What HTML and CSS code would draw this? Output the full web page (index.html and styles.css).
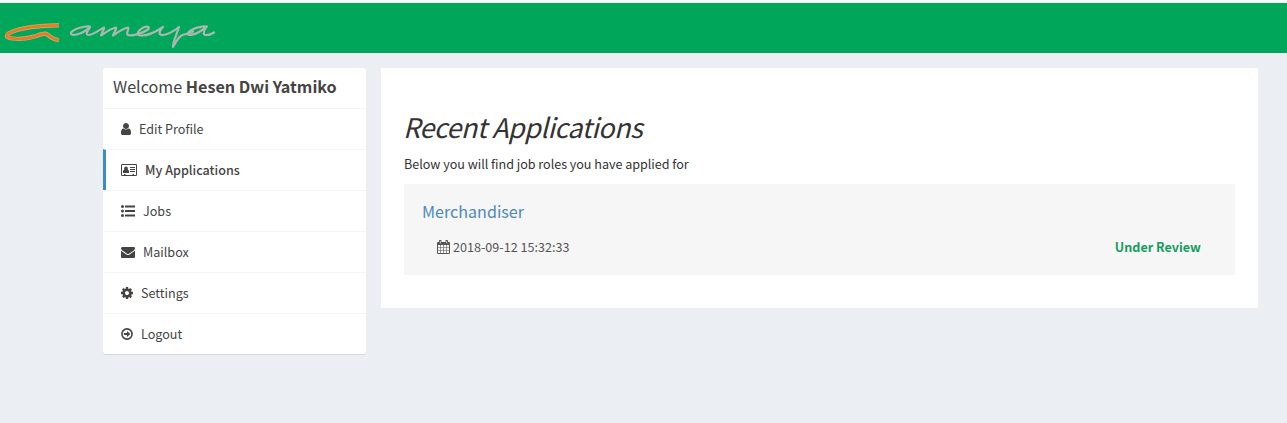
FILE: index.html
```
<!DOCTYPE html>
<html lang="en">
<head>
<meta charset="utf-8">
<title>Recent Applications</title>
<link rel="stylesheet" href="styles.css">
</head>
<body>
<header class="topbar">
  <svg class="logo" width="220" height="50" viewBox="0 3 220 50" role="img" aria-label="ameya">
    <g fill="none" stroke-linecap="butt" stroke-linejoin="round">
      <path stroke="#c5b574" stroke-width="4.200" d="M59 25.300C51 25.200 40 25.800 31 27.200C22 28.500 13 31 9 33.300C5 35.800 6 37.800 13 38.500C20 39.200 29 38.300 35 36.300C39 35 43 33.300 45.500 33.600C49 34.500 51 39.500 59 40"/>
      <path stroke="#e97a25" stroke-width="2.800" d="M59 25.300C51 25.200 40 25.800 31 27.200C22 28.500 13 31 9 33.300C5 35.800 6 37.800 13 38.500C20 39.200 29 38.300 35 36.300C39 35 43 33.300 45.500 33.600C49 34.500 51 39.500 59 40"/>
      <path stroke="#a9b8ad" stroke-width="2.200" stroke-linecap="round" d="M90 26.500C85 25.500 74 29 71 32.500C70 36 76 35 80 33.500C84 32 88 29 90 27.500C87 31 85 35 89 35C94 34.500 99 30 104 27.500C105 28 102 32 101 35.500C106 32 112 28 116 27.500C117 29 114 32 113 35.500C118 32 124 28 128 27.500C130 29 125 33 128 35C132 36.500 143 33 148 29.500C151 26 145 25.500 141 29C136 33 137 35.500 142 35.500C149 35.500 157 31 163 27C158 32 159 35.500 163 35C168 34.500 174 31 179 27C177 34 173 41 173 47C177 41 178 36 184 34.500C188 34 190 33 193 31.500M207 26.500C201 25.500 191 29 188 33C187 36.500 194 35 199 32L206 27.500C203 32 203 35 206 35C209 35 212 34 214 32.500"/>
    </g>
  </svg>
</header>
<div class="page">
  <aside class="sidebar">
    <div class="welcome">Welcome <b>Hesen Dwi Yatmiko</b></div>
    <nav class="menu">
      <a class="item"><svg class="icon" width="10" height="14" viewBox="256 0 1280 1792"><path d="M1536 1399q0 109-62.500 187t-150.500 78h-854q-88 0-150.500-78t-62.500-187q0-85 8.500-160.500t31.500-152 58.500-131 94-89 134.500-34.500q131 128 313 128t313-128q76 0 134.500 34.500t94 89 58.500 131 31.500 152 8.500 160.500zm-256-887q0 159-112.500 271.500t-271.500 112.500-271.500-112.500-112.500-271.500 112.500-271.500 271.500-112.500 271.500 112.500 112.500 271.500z"/></svg><span>Edit Profile</span></a>
      <a class="item active"><svg class="icon" width="16" height="14" viewBox="0 0 16 14"><path fill-rule="evenodd" d="M1.200 1h13.600A1.200 1.200 0 0 1 16 2.200v9.600a1.200 1.200 0 0 1-1.200 1.200H1.200A1.200 1.200 0 0 1 0 11.800V2.200A1.200 1.200 0 0 1 1.200 1zM1 2V12h2v-1h1.500v1h7v-1H13v1h2V2zM9 4h5v1H9zM9 6h5v1H9zM9 8h5v1H9zM2 10V8.200Q2 7 3.200 6.800Q2.900 3.500 5 3.500T6.800 6.800Q8 7 8 8.200V10z"/></svg><span>My Applications</span></a>
      <a class="item"><svg class="icon" width="14" height="14" viewBox="0 0 14 14"><circle cx="1.500" cy="2.400" r="1.500"/><circle cx="1.500" cy="7" r="1.500"/><circle cx="1.500" cy="11.600" r="1.500"/><path d="M4 1.400h10v2H4zM4 6h10v2H4zM4 10.600h10v2H4z"/></svg><span>Jobs</span></a>
      <a class="item"><svg class="icon" width="14" height="14" viewBox="0 0 1792 1792"><path d="M1792 710v794q0 66-47 113t-113 47h-1472q-66 0-113-47t-47-113v-794q44 49 101 87 362 246 497 345 57 42 92.500 65.500t94.500 48 110 24.500h2q51 0 110-24.500t94.500-48 92.500-65.500q170-123 498-345 57-39 100-87zm0-294q0 79-49 151t-122 123q-376 261-468 325-10 7-42.500 31t-54 38.800-52 32.500-57.500 27-50 9h-2q-23 0-50-9t-57.500-27-52-32.500-54-38.800-42.500-31q-91-64-262-182.500t-205-142.500q-62-42-117-115.500t-55-136.500q0-78 41.500-130t118.500-52h1472q65 0 112.500 47t47.500 113z"/></svg><span>Mailbox</span></a>
      <a class="item"><svg class="icon" width="12" height="14" viewBox="128 0 1536 1792"><path d="M1152 896q0-106-75-181t-181-75-181 75-75 181 75 181 181 75 181-75 75-181zm512-109v222q0 12-8 23t-20 13l-185 28q-19 54-39 91 35 50 107 138 10 12 10 25t-9 23q-27 37-99 108t-94 71q-12 0-26-9l-138-108q-44 23-91 38-16 136-29 186-7 28-36 28h-222q-14 0-24.500-8.500t-11.500-21.500l-28-184q-49-16-90-37l-141 107q-10 9-25 9-14 0-25-11-126-114-165-168-7-10-7-23 0-12 8-23 15-21 51-66.500t54-70.500q-27-50-41-99l-183-27q-13-2-21-12.500t-8-23.500v-222q0-12 8-23t19-13l186-28q14-46 39-92-40-57-107-138-10-12-10-24 0-10 9-23 26-36 98.500-107.500t94.500-71.500q13 0 26 10l138 107q44-23 91-38 16-136 29-186 7-28 36-28h222q14 0 24.500 8.500t11.500 21.500l28 184q49 16 90 37l142-107q9-9 24-9 13 0 25 10 129 119 165 170 7 8 7 22 0 12-8 23-15 21-51 66.500t-54 70.500q26 50 41 98l183 28q13 2 21 12.500t8 23.500z"/></svg><span>Settings</span></a>
      <a class="item"><svg class="icon" width="12" height="14" viewBox="0 0 12 14"><circle cx="6" cy="7" r="5.100" fill="none" stroke="currentColor" stroke-width="1.600"/><path d="M2.900 6.100H6V4L9.300 7 6 10V7.900H2.900z"/></svg><span>Logout</span></a>
    </nav>
  </aside>
  <main class="content">
    <h1 class="title">Recent Applications</h1>
    <p class="lead">Below you will find job roles you have applied for</p>
    <section class="job">
      <a class="role">Merchandiser</a>
      <div class="meta">
        <span class="when"><svg class="cal" width="13" height="14" viewBox="0 0 13 14"><path fill-rule="evenodd" d="M1 2h1V1a1 1 0 0 1 2.500 0v1h4V1A1 1 0 0 1 11 1v1h1a1 1 0 0 1 1 1v10a1 1 0 0 1-1 1H1a1 1 0 0 1-1-1V3a1 1 0 0 1 1-1zM1 5v2h2V5zM3.600 5v2h2.600V5zM6.800 5v2h2.600V5zM10 5v2h2V5zM1 7.600v2.400h2V7.600zM3.600 7.600v2.400h2.600V7.600zM6.800 7.600v2.400h2.600V7.600zM10 7.600v2.400h2V7.600zM1 10.600V13h2v-2.400zM3.600 10.600V13h2.600v-2.400zM6.800 10.600V13h2.600v-2.400zM10 10.600V13h2v-2.400zM2.900 1v2.500h.7V1zM9.400 1v2.500h.7V1z"/></svg><span>2018-09-12 15:32:33</span></span>
        <span class="status">Under Review</span>
      </div>
    </section>
  </main>
</div>
</body>
</html>
```
FILE: styles.css
```
* { box-sizing: border-box; }
body {
  margin: 0;
  min-height: 423px;
  background: #ebeff4;
  color: #333;
  font-family: "Source Sans Pro", "Noto Sans CJK SC", sans-serif;
  font-size: 12.600px;
  line-height: 20px;
}
.topbar {
  height: 53px;
  border-top: 3px solid #f4fbf8;
  background: #00a65a;
}
.logo { display: block; }
.page {
  display: grid;
  grid-template-columns: 263px 877px;
  gap: 15px;
  align-items: start;
  padding: 15px 29px 0 103px;
}
.sidebar {
  height: 286px;
  overflow: hidden;
  border-radius: 3px;
  background: #fff;
  box-shadow: 0 1px 1px rgba(0, 0, 0, .1);
  color: #444;
}
.welcome {
  height: 40px;
  padding: 8px 10px;
  font-size: 16.150px;
  white-space: nowrap;
}
.item {
  display: flex;
  align-items: center;
  gap: 8px;
  height: 41px;
  padding-left: 15px;
  border-top: 1px solid #f4f4f4;
  border-left: 3px solid transparent;
  white-space: nowrap;
}
.active { border-left-color: #3c8dbc; font-weight: 500; }
.icon, .cal { flex: none; fill: currentColor; }
.content {
  height: 240px;
  padding: 43px 23px 0;
  background: #fff;
}
.title {
  margin: 0 0 0 -1px;
  font-size: 27px;
  font-style: italic;
  font-weight: 400;
  letter-spacing: -.52px;
  line-height: 32px;
  white-space: nowrap;
}
.lead { margin: 11px 0 10px; letter-spacing: -.03px; }
.job {
  height: 91px;
  padding: 17px 34px 0 18px;
  background: #f6f6f6;
}
.role { display: block; color: #4f89b8; font-size: 16.100px; }
.meta {
  display: flex;
  justify-content: space-between;
  padding: 16px 0 0 15px;
  color: #555;
}
.when { display: flex; align-items: center; gap: 3px; }
.status { color: #159d60; font-weight: 700; }
```
